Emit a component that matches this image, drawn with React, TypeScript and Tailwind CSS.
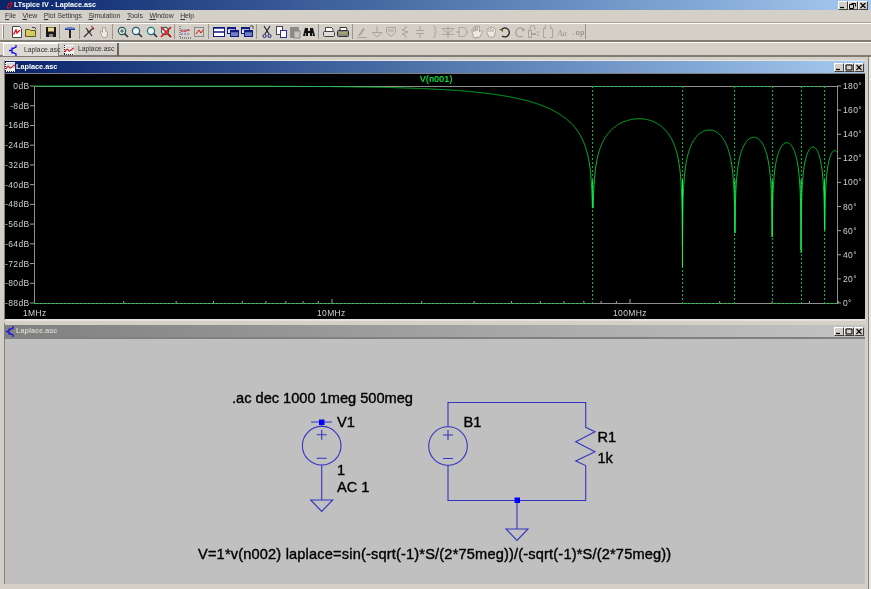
import React from "react";

const I = ({ children }: { children: React.ReactNode }) => (
  <div className="w-[14.3px] h-[14px] flex items-center justify-center shrink-0">
    <svg width="14" height="14" viewBox="0 0 14 14" fill="none">{children}</svg>
  </div>
);
const Sep = () => (
  <div className="w-[5px] h-[15px] flex justify-center shrink-0">
    <div className="w-[2px] h-full border-l border-[#9a968e] border-r-white" />
  </div>
);
const G = "#a8a49c";
const Mag = ({ c = "#1a5a5a", x = false, plus = false }: { c?: string; x?: boolean; plus?: boolean }) => (
  <>
    <circle cx="6" cy="6" r="3.6" stroke={c} strokeWidth="1.2" fill="#e8f4f4" />
    <path d="M8.6 8.6 12 12" stroke="#333" strokeWidth="1.6" />
    {plus && <path d="M4 6h4M6 4v4" stroke="#444" />}
    {x && <path d="M2 2 12 12M12 2 2 12" stroke="#e01010" strokeWidth="1.6" />}
  </>
);
const Win = ({ small = false }: { small?: boolean }) =>
  small ? (
    <>
      <rect x="1.5" y="2.5" width="8" height="6" stroke="#101a80" fill="#e8e8f4" />
      <path d="M1.5 3.5h8" stroke="#101a80" strokeWidth="1.5" />
      <rect x="4.5" y="5.5" width="8" height="6" stroke="#101a80" fill="#7080c0" />
      <path d="M4.5 6.5h8" stroke="#101a80" strokeWidth="1.5" />
    </>
  ) : (
    <>
      <rect x="1.5" y="2.5" width="11" height="9" stroke="#101a80" fill="#fff" />
      <path d="M1.5 7h11" stroke="#101a80" strokeWidth="1.5" />
      <path d="M1.5 3h11" stroke="#101a80" strokeWidth="1.5" />
    </>
  );

const tools: React.ReactNode[][] = [
  [
    <I key="n">
      <path d="M2.5 1.5h7l2 2v9h-9z" stroke="#444" fill="#fff" />
      <path d="M3.500 9.500 6 5l1 3 3-3" stroke="#e01010" strokeWidth="1.4" />
    </I>,
    <I key="o">
      <path d="M1.5 4.5h4l1 1h5v6h-10z" stroke="#5a5a20" fill="#d8c860" />
      <path d="M8 2.5h3l1 2" stroke="#444" />
    </I>,
  ],
  [
    <I key="s">
      <rect x="2" y="2" width="10" height="10" fill="#1a1a1a" />
      <rect x="4" y="2.5" width="6" height="4" fill="#e8d890" />
      <rect x="5" y="9" width="4" height="3" fill="#888" />
    </I>,
  ],
  [
    <I key="h">
      <path d="M2 3.5C4 1.5 10 1.5 12 3.5V5H2z" fill="#2040a0" />
      <path d="M7 5v8" stroke="#222" strokeWidth="2" />
      <path d="M3 3h8" stroke="#b0c0e8" />
    </I>,
  ],
  [
    <I key="p">
      <path d="M2 12 11 3M4 3l6 8" stroke="#333" strokeWidth="1.2" />
      <path d="M9 1l3 2-1 2" stroke="#c03030" />
      <path d="M5 6l4 1" stroke="#333" />
    </I>,
    <I key="ha">
      <path d="M5.5 12.5 3.5 8V6h1l1 1.5V2.5h3V6l2 1v3l-1 2.500z" stroke={G} fill="#ece9e2" />
    </I>,
  ],
  [
    <I key="z1"><Mag plus /></I>,
    <I key="z2"><Mag c="#205a6a" /></I>,
    <I key="z3"><Mag c="#20707a" /></I>,
    <I key="z4"><Mag c="#206070" x /></I>,
  ],
  [
    <I key="a1">
      <path d="M2 1v12h11" stroke="#444" strokeDasharray="1 1" />
      <path d="M3 5h9M3 9h9" stroke="#6060b0" strokeDasharray="2 1" />
      <path d="M3 7c2-3 3 1 5-1s3 0 4-1" stroke="#e01010" />
    </I>,
    <I key="a2">
      <rect x="2.500" y="2.500" width="9" height="9" stroke="#444" strokeDasharray="1 1" />
      <path d="M4 9 7 5l2 3 2-3" stroke="#e01010" />
    </I>,
  ],
  [
    <I key="w1"><Win /></I>,
    <I key="w2"><Win small /></I>,
    <I key="w3">
      <Win small />
      <path d="M10 1h3v3" stroke="#555" />
    </I>,
  ],
  [
    <I key="c1">
      <path d="M4 1l5 8M10 1 5 9" stroke="#223" strokeWidth="1.2" />
      <circle cx="4.500" cy="11" r="1.600" stroke="#202080" />
      <circle cx="9.500" cy="11" r="1.600" stroke="#202080" />
    </I>,
    <I key="c2">
      <rect x="2.500" y="1.500" width="6" height="8" stroke="#445" fill="#fff" />
      <rect x="6.500" y="5.500" width="6" height="7" stroke="#303090" fill="#fff" />
    </I>,
    <I key="c3">
      <rect x="2" y="2" width="9" height="11" rx="1" fill="#8c8a84" />
      <rect x="6" y="6" width="6" height="7" fill="#c8c4bc" stroke="#8c8a84" />
    </I>,
    <I key="f">
      <path d="M3 3h3v3h2V3h3l2 8H8V8H6v3H1z" fill="#111" />
      <path d="M3.500 11v-3M10.500 11v-3" stroke="#8890a0" />
    </I>,
  ],
  [
    <I key="pr1">
      <path d="M3.500 6V2.500h6L11 4v2" stroke="#444" fill="#fff" />
      <rect x="1.500" y="6.500" width="11" height="5" rx="1" stroke="#444" fill="#dcdcdc" />
    </I>,
    <I key="pr2">
      <path d="M4 5V2.500h6.500L11 5" stroke="#333" fill="#fff" />
      <rect x="1.500" y="5.500" width="11" height="6" rx="1" stroke="#333" fill="#888" />
      <path d="M3 8h8" stroke="#c8c050" />
    </I>,
  ],
  [
    <I key="d1">
      <path d="M3 11 8 3l2 1-5 7z" fill={G} />
      <path d="M2 12.500h10" stroke={G} />
    </I>,
    <I key="d2"><path d="M7 1v6M2 7.500h10L7 12z" stroke={G} /></I>,
    <I key="d3">
      <path d="M2.500 2.500h9v5l-4.500 4-4.500-4z" stroke={G} />
      <path d="M5 4v3M7 4v3M9 4v3" stroke={G} />
    </I>,
    <I key="d4"><path d="M8 1v2L4 5l6 2-6 2 4 2v2" stroke={G} /></I>,
    <I key="d5"><path d="M7 1v4M2.500 5.500h9M2.500 8.500h9M7 9v4" stroke={G} /></I>,
    <I key="d6"><path d="M6 1c3 0 3 3.500 1 3.500 2 0 3 4 0 4 2 0 2 4-1 4" stroke={G} /></I>,
    <I key="d7"><path d="M1 3.500h12L7 9 1 3.500zM1 9.500h12M7 1v12" stroke={G} /></I>,
    <I key="d8">
      <path d="M4 2.500h3.500a4.500 4.500 0 0 1 0 9H4z" stroke={G} />
      <path d="M1 7h4M11 7h2" stroke={G} />
    </I>,
    <I key="d9"><path d="M4 13 2 7V4h1l1 3V2h1.500v4V1H7v5l1-5h1.500v6l2-2 1 1-2.500 6z" stroke={G} fill="#ece9e2" /></I>,
    <I key="d10"><path d="M5 12 3 8V4l2-1 2-1 3 1 2 2-1 3-1 4z" stroke={G} fill="#ece9e2" /><path d="M5 4v3M7 3v4M9 4v3" stroke={G} /></I>,
    <I key="u">
      <path d="M3 5a4.500 4.500 0 1 1 1 6" stroke="#222" strokeWidth="1.300" />
      <path d="M1 4h4v3z" fill="#705a10" />
    </I>,
    <I key="r">
      <path d="M11 5a4.500 4.500 0 1 0-1 6" stroke={G} strokeWidth="1.300" />
      <path d="M13 4H9v3z" fill={G} />
    </I>,
    <I key="m1">
      <rect x="1.500" y="5.500" width="3" height="7" stroke={G} />
      <path d="M3 5V3a2.500 2.500 0 0 1 5 0v2M9.500 7h3M9.500 10h3" stroke={G} />
      <path d="M5 9h4" stroke={G} strokeWidth="2" />
    </I>,
    <I key="m2">
      <path d="M5 3.500H2.500v9H5M9 3.500h2.500v9H9" stroke={G} />
      <path d="M4 3V2a3 3 0 0 1 6 0v1" stroke={G} />
    </I>,
    <I key="aa">
      <text x="1" y="11" fontFamily="Liberation Serif, serif" fontStyle="italic" fontSize="9" fill="#98948c">Aa</text>
    </I>,
    <I key="op">
      <text x="1" y="10" fontFamily="Liberation Mono, monospace" fontWeight="700" fontSize="7.500" fill="#98948c">.op</text>
    </I>,
  ],
];

const Btn = ({ kind, className = "" }: { kind: "min" | "max" | "rest" | "x"; className?: string }) => (
  <div className={`w-[10px] h-[9px] bg-[#d4d0c8] border-t border-l border-white border-r border-b border-r-[#404040] border-b-[#404040] flex items-center justify-center ${className}`}>
    <svg width="8" height="7" viewBox="0 0 8 7" fill="none">
      {kind === "min" && <path d="M1 5.500h4" stroke="#000" strokeWidth="1.200" />}
      {kind === "max" && <path d="M1 1h6v5H1z" stroke="#000" />}
      {kind === "rest" && <path d="M2.500 1.500h4v3M.500 2.500h4v4h-4z" stroke="#000" />}
      {kind === "x" && <path d="M1.500 1 6.500 6M6.500 1l-5 5" stroke="#000" strokeWidth="1.100" />}
    </svg>
  </div>
);
const Ctrl = () => (
  <div className="flex items-center mr-[1px]">
    <Btn kind="min" />
    <Btn kind="max" />
    <Btn kind="x" />
  </div>
);

const PlotIcon = () => (
  <svg width="10" height="10" viewBox="0 0 10 10" fill="none" className="shrink-0">
    <rect width="10" height="10" fill="#f4f4f4" />
    <path d="M.500 0v10M0 9.500h10" stroke="#222" strokeDasharray="1 1" />
    <path d="M1 7c2-5 3-2 4-1s3-3 5-3" stroke="#e01010" strokeWidth="1.200" />
    <path d="M2 2h8M2 5h8" stroke="#8080a0" strokeWidth=".5" />
  </svg>
);
const SchemIcon = () => (
  <svg width="8" height="11" viewBox="0 0 8 11" fill="none" className="shrink-0">
    <path d="M7 0v2L3 4v3l4 2v2M3 5.500H0M3 2.500v6" stroke="#1010e8" strokeWidth="1.300" />
  </svg>
);

/* ---------- chart ---------- */
const L = 34, R = 837, T = 86, B = 303, DEC = 298;
const fx = (f: number) => L + DEC * Math.log10(f);
const nulls = [1, 2, 3, 4, 5, 6].map((n) => fx(75 * n));
const depth = [208, 267, 233, 237, 253, 230];
const curve = (() => {
  let d = "";
  for (let x = L; x <= R; x += 0.2) {
    const f = Math.pow(10, (x - L) / DEC);
    const a = (Math.PI * f) / 75;
    const s = Math.abs(Math.sin(a) / a);
    let y = T - 20 * Math.log10(Math.max(s, 1e-9)) * 2.466;
    let lim = 400;
    nulls.forEach((nx, i) => {
      if (Math.abs(nx - x) < 6) lim = depth[i];
    });
    y = Math.min(y, lim);
    d += `${d ? "L" : "M"}${x.toFixed(1)} ${y.toFixed(1)}`;
  }
  return d;
})();
const dbs = [0, -8, -16, -24, -32, -40, -48, -56, -64, -72, -80, -88];
const degs = [180, 160, 140, 120, 100, 80, 60, 40, 20, 0];
const xticks: number[] = [];
[1, 10, 100].forEach((d) => [2, 3, 4, 5, 6, 7, 8, 9].forEach((m) => d * m <= 500 && xticks.push(fx(d * m))));
const bounds = [L, ...nulls, R];
const Chart = () => (
  <svg className="block w-full h-full" viewBox="5 74 860 245" fontFamily="Liberation Sans, sans-serif" fontSize="8.500" letterSpacing=".35">
    <path d={`M${L} ${B}V${T}H${R}V${B}H${L}`} stroke="#909090" fill="none" shapeRendering="crispEdges" />
    {dbs.map((d, i) => {
      const y = T + (i * (B - T)) / 11;
      return (
        <g key={d}>
          <path d={`M30 ${y}H34`} stroke="#a0a0a0" />
          <text x="29.500" y={y + 3} textAnchor="end" fill="#cfcfcf">{d}dB</text>
        </g>
      );
    })}
    {degs.map((d, i) => {
      const y = T + (i * (B - T)) / 9;
      return (
        <g key={d}>
          <path d={`M837 ${y}H841`} stroke="#a0a0a0" />
          <text x="843" y={y + 3} fill="#cfcfcf">{d}°</text>
        </g>
      );
    })}
    {xticks.map((x) => (
      <path key={x} d={`M${x} 303v-2`} stroke="#a0a0a0" />
    ))}
    <path d={`M${fx(10)} 303v-4M${fx(100)} 303v-4`} stroke="#a0a0a0" />
    <text x="23" y="316" fill="#cfcfcf">1MHz</text>
    <text x="317" y="316" fill="#cfcfcf">10MHz</text>
    <text x="613" y="316" fill="#cfcfcf">100MHz</text>
    <text x="420" y="82" fill="#00ff40" stroke="#00ff40" strokeWidth=".2">V(n001)</text>
    {bounds.slice(0, -1).map((x0, i) => {
      const x1 = bounds[i + 1];
      const y = i % 2 === 0 ? B : T;
      return <path key={i} d={`M${x0} ${y}H${x1}`} stroke="#00c030" strokeDasharray="2 2" shapeRendering="crispEdges" />;
    })}
    {nulls.map((x) => (
      <path key={x} d={`M${x} ${T}V${B}`} stroke="#00b828" strokeDasharray="2 2" shapeRendering="crispEdges" />
    ))}
    <path d={curve} stroke="#00c832" fill="none" strokeWidth="1" />
    {nulls.map((x, i) => (
      <path key={x} d={`M${x} 180V${depth[i]}`} stroke="#20f04c" strokeWidth="1.100" />
    ))}
  </svg>
);

/* ---------- schematic ---------- */
const W = "#3434c0";
const Src = ({ x, y }: { x: number; y: number }) => (
  <g stroke={W} fill="none" strokeWidth="1.100">
    <circle cx={x} cy={y} r="19.300" />
    <path d={`M${x - 5} ${y - 11}h10M${x} ${y - 16}v10M${x - 5} ${y + 12.500}h10`} />
  </g>
);
const Gnd = ({ x, y }: { x: number; y: number }) => (
  <path d={`M${x - 11} ${y}h22L${x} ${y + 11.500}z`} stroke={W} strokeWidth="1.100" fill="none" />
);
const Schem = () => (
  <svg className="block w-full h-full" viewBox="5 339 860 245" fontFamily="Liberation Sans, sans-serif" fontSize="14.600" fill="#000" stroke="#000" strokeWidth=".38">
    <text x="232" y="403">.ac dec 1000 1meg 500meg</text>
    <Src x={321.700} y={445.700} />
    <path d="M311 422h21M321.700 422v4M321.700 465v35" stroke={W} strokeWidth="1.100" fill="none" />
    <Gnd x={321.700} y={500} />
    <rect x="319" y="419.500" width="5.500" height="5.500" fill="#0000ff" stroke="none" />
    <text x="337" y="427">V1</text>
    <text x="337" y="475">1</text>
    <text x="337" y="492">AC 1</text>
    <Src x={448} y={446} />
    <path d="M448 426.500V402.500H585.700V427.300L595 431.700 575.700 441.700 595 451.700 575.700 461 585.700 465.500V500.500H448V465.500M517 500V529" stroke={W} strokeWidth="1.100" fill="none" />
    <Gnd x={517} y={529} />
    <rect x="514.500" y="497.500" width="5.500" height="5.500" fill="#0000ff" stroke="none" />
    <text x="463.500" y="427">B1</text>
    <text x="597.500" y="442">R1</text>
    <text x="597.500" y="463">1k</text>
    <text x="198" y="558.500" letterSpacing=".17">V=1*v(n002) laplace=sin(-sqrt(-1)*S/(2*75meg))/(-sqrt(-1)*S/(2*75meg))</text>
  </svg>
);

const Menu = ({ k, rest }: { k: string; rest: string }) => (
  <span>
    <span className="underline">{k}</span>
    {rest}
  </span>
);

export default function App() {
  return (
    <div className="w-[871px] h-[589px] overflow-hidden bg-[#d4d0c8] flex flex-col text-[6.8px] text-[#111] blur-[0.35px] font-['Liberation_Sans',sans-serif]">
      <div className="h-[10px] shrink-0 bg-gradient-to-r from-[#0a246a] to-[#a6caf0] flex items-center justify-between pl-[6px]">
        <div className="flex items-center gap-[1px] text-white font-bold text-[7.2px]">
          <svg width="7" height="7" viewBox="0 0 7 7" fill="none"><path d="M1 6 3 1h3L4 6z" stroke="#e01010" /></svg>
          <span>LTspice IV - Laplace.asc</span>
        </div>
        <div className="flex items-center mr-[3px]">
          <Btn kind="min" />
          <Btn kind="rest" />
          <Btn kind="x" />
        </div>
      </div>

      <div className="h-[12px] shrink-0 flex items-center gap-[6.6px] pl-[5px] text-[#333]">
        <Menu k="F" rest="ile" />
        <Menu k="V" rest="iew" />
        <Menu k="P" rest="lot Settings" />
        <Menu k="S" rest="imulation" />
        <Menu k="T" rest="ools" />
        <Menu k="W" rest="indow" />
        <Menu k="H" rest="elp" />
      </div>

      <div className="h-[20px] shrink-0 border-t border-t-[#a8a49c] border-b-2 border-b-[#807c74] shadow-[inset_0_1px_0_#fff] flex items-center pl-[2px] pr-[3px]">
        <div className="w-[2px] h-[14px] bg-[#fff] border-r border-[#888] mr-[6px]" />
        {tools.map((group, i) => (
          <React.Fragment key={i}>
            {i > 0 && <Sep />}
            {group}
          </React.Fragment>
        ))}
        <Sep />
      </div>

      <div className="h-[15px] shrink-0 flex items-stretch pl-[3px] pt-[1px] border-b-2 border-b-[#807c74] shadow-[0_1px_0_#fff_inset]">
        <div className="w-[56px] h-[13px] bg-[#dedbd4] border-t border-l border-white border-r border-r-[#888] flex items-center pl-[5px] gap-[7px] text-[#333]">
          <SchemIcon />
          <span>Laplace.asc</span>
        </div>
        <div className="w-[59px] h-[13px] ml-[1px] border-r-2 border-r-[#666] flex items-center pl-[4px] gap-[4px] text-[#333]">
          <PlotIcon />
          <span>Laplace.asc</span>
        </div>
      </div>

      <div className="flex-1 min-h-0 border-r-2 border-r-[#e8e6e0]">
        <div className="h-full flex flex-col pl-[4px] pr-[3px] pt-[3px] pb-[5px] border-r border-r-[#808080]">
          <div className="h-[261px] shrink-0 flex flex-col border-l border-t border-[#808080] border-t-[#e8e6e0] border-b-2 border-b-[#e4e2dc]">
            <div className="h-[13px] shrink-0 bg-gradient-to-r from-[#0a246a] to-[#a6caf0] border-b border-[#808080] flex items-center justify-between">
              <div className="flex items-center gap-[1px] text-white font-bold text-[7.3px]">
                <PlotIcon />
                <span>Laplace.asc</span>
              </div>
              <Ctrl />
            </div>
            <div className="flex-1 min-h-0 bg-black">
              <Chart />
            </div>
          </div>
          <div className="flex-1 min-h-0 flex flex-col border-l border-[#808080] mt-[2px] pt-[2px]">
            <div className="h-[14px] shrink-0 bg-gradient-to-r from-[#808080] to-[#c4c4c4] border-b-2 border-[#808080] flex items-center justify-between">
              <div className="flex items-center gap-[2px] pl-[1px] text-[#d4d0c8] font-bold text-[7.3px]">
                <SchemIcon />
                <span>Laplace.asc</span>
              </div>
              <Ctrl />
            </div>
            <div className="flex-1 min-h-0 bg-[#c0c0c0]">
              <Schem />
            </div>
          </div>
        </div>
      </div>
    </div>
  );
}
